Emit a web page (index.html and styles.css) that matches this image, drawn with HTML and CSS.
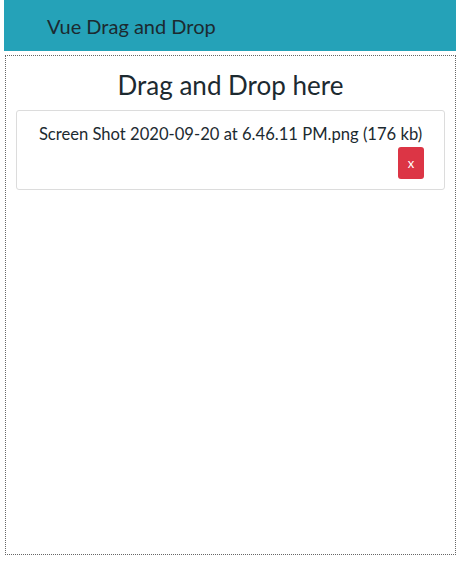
FILE: index.html
```html
<!DOCTYPE html>
<html>
<head>
<meta charset="utf-8">
<link rel="stylesheet" href="styles.css">
</head>
<body>
<div class="app">
  <header class="topbar">Vue Drag and Drop</header>
  <section class="dropzone">
    <h1 class="title">Drag and Drop here</h1>
    <div class="file-card">
      <div class="file-name">Screen Shot 2020-09-20 at 6.46.11 PM.png (176 kb)</div>
      <div class="file-actions"><button class="remove">x</button></div>
    </div>
  </section>
</div>
</body>
</html>
```
FILE: styles.css
```css
* { box-sizing: border-box; }
html, body { margin: 0; padding: 0; background: #fff; }
body { font-family: Lato, "Open Sans", sans-serif; color: #212529; }
.app { padding: 0 7px 0 4px; display: flex; flex-direction: column; height: 564px; }
.topbar {
  background: #25a2b8;
  height: 51px;
  padding: 0 0 0 43px;
  display: flex;
  align-items: center;
  font-size: 20px;
  color: #1c2a30;
}
.dropzone {
  margin: 4px 0 9px 1px;
  border: 1px dotted #666;
  flex: 1;
  padding: 0 10px;
}
.title {
  margin: 14px 0 10px;
  text-align: center;
  font-weight: 400;
  font-size: 26px;
  line-height: 30px;
  color: #1c2a30;
}
.file-card {
  border: 1px solid #dcdcdc;
  border-radius: 3px;
  padding: 12px 20px 10px;
}
.file-name { text-align: center; font-size: 16.6px; line-height: 22px; color: #1c2a30; }
.file-actions { display: flex; justify-content: flex-end; margin-top: 2px; }
.remove {
  background: #dc3545;
  color: #fff;
  border: none;
  border-radius: 3px;
  width: 26px;
  height: 32px;
  font-family: Lato, sans-serif;
  font-size: 13px;
  padding: 0;
}
```
